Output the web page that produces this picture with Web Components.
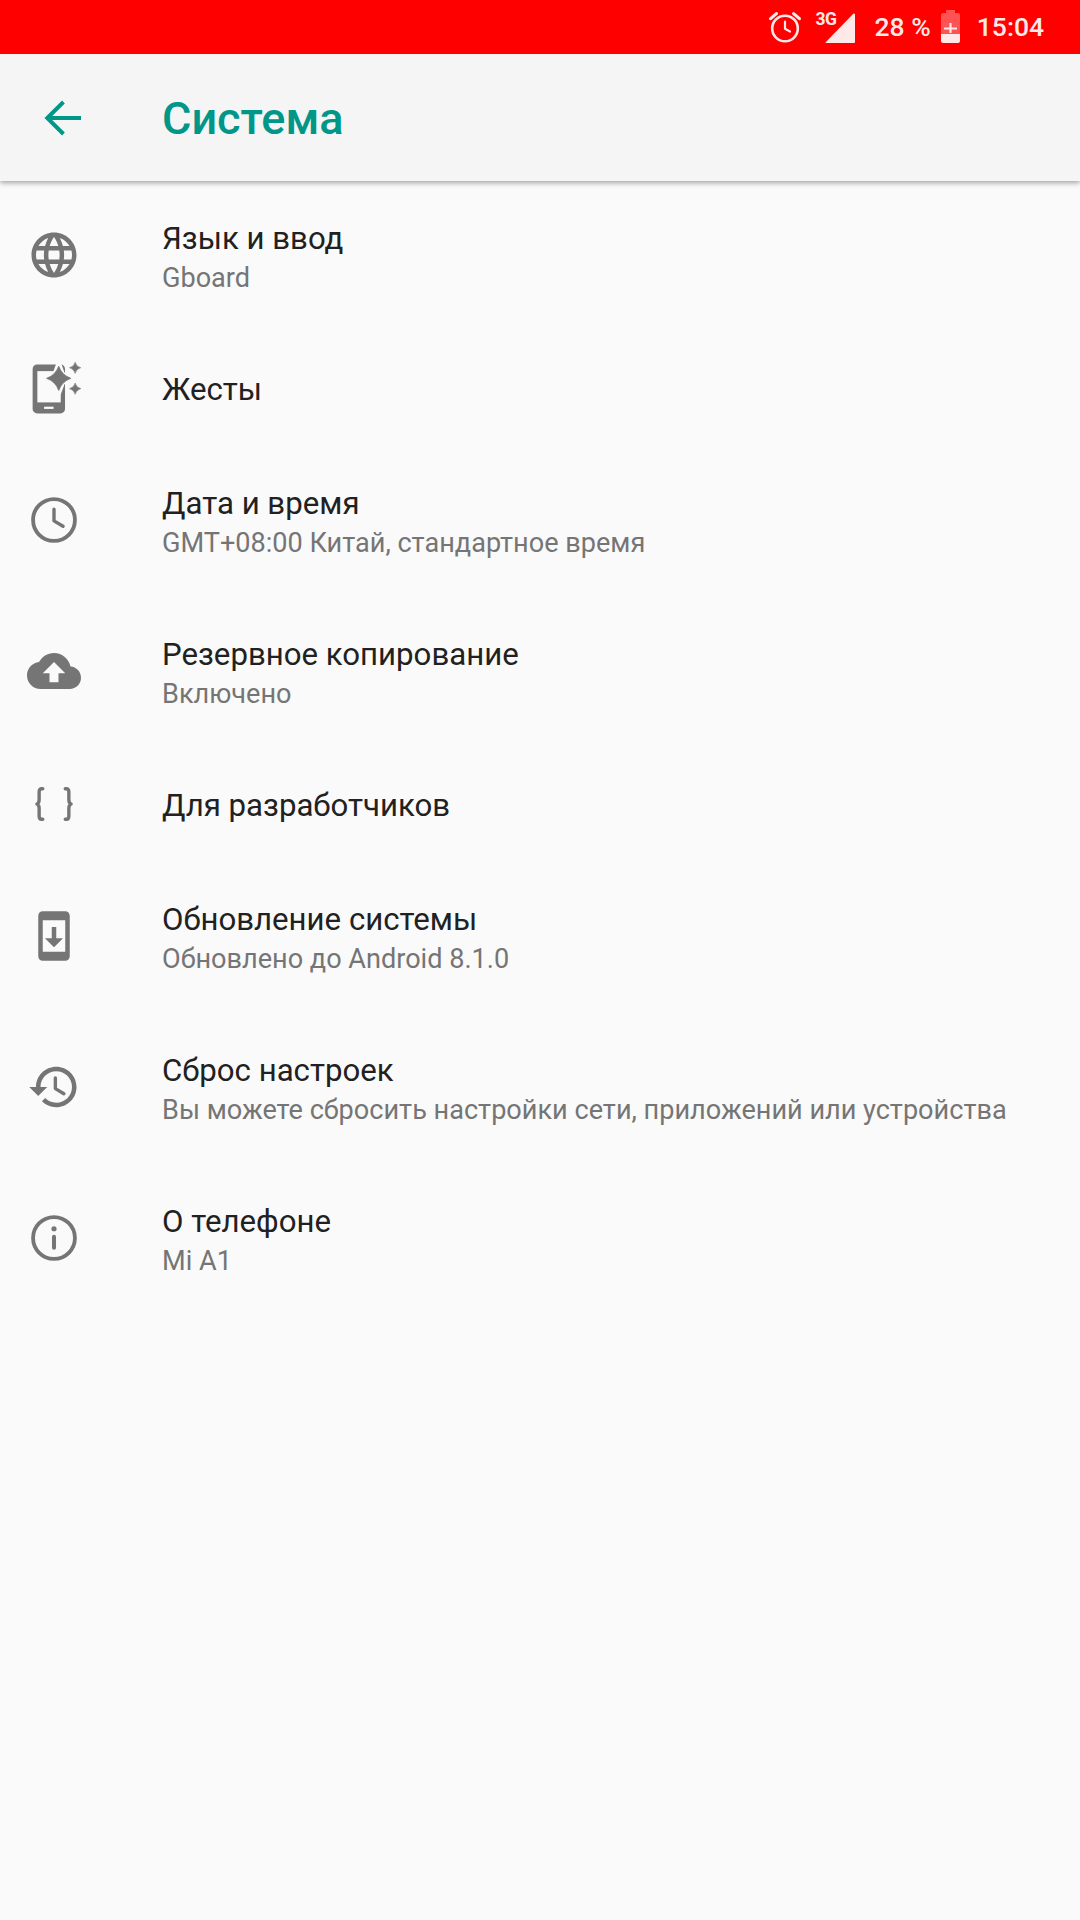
<!DOCTYPE html>
<html lang="ru"><head><meta charset="utf-8"><title>Система</title>
<style>
html,body{margin:0;padding:0;background:#fafafa}
body{width:1080px;height:1920px;font-family:Roboto,"Noto Sans",sans-serif;overflow:hidden}
</style></head><body>
<settings-screen>
  <status-bar slot="status" battery="28 %" time="15:04"></status-bar>
  <app-bar slot="bar">Система</app-bar>
  <settings-item icon="language" summary="Gboard">Язык и ввод</settings-item>
  <settings-item icon="gesture">Жесты</settings-item>
  <settings-item icon="clock" summary="GMT+08:00 Китай, стандартное время">Дата и время</settings-item>
  <settings-item icon="backup" summary="Включено">Резервное копирование</settings-item>
  <settings-item icon="dev">Для разработчиков</settings-item>
  <settings-item icon="update" summary="Обновлено до Android 8.1.0">Обновление системы</settings-item>
  <settings-item icon="restore" summary="Вы можете сбросить настройки сети, приложений или устройства">Сброс настроек</settings-item>
  <settings-item icon="info" summary="Mi A1">О телефоне</settings-item>
</settings-screen>
<script>
const ICONS={
language:'<path fill="currentColor" d="M11.99 2C6.47 2 2 6.48 2 12s4.47 10 9.99 10C17.52 22 22 17.52 22 12S17.52 2 11.99 2zm6.93 6h-2.95c-.32-1.25-.78-2.45-1.38-3.56 1.84.63 3.37 1.91 4.33 3.56zM12 4.04c.83 1.2 1.48 2.53 1.91 3.96h-3.82c.43-1.43 1.08-2.76 1.91-3.96zM4.26 14C4.1 13.36 4 12.69 4 12s.1-1.36.26-2h3.38c-.08.66-.14 1.32-.14 2 0 .68.06 1.34.14 2H4.26zm.82 2h2.95c.32 1.25.78 2.45 1.38 3.56-1.84-.63-3.37-1.9-4.33-3.56zm2.95-8H5.08c.96-1.66 2.49-2.93 4.33-3.56C8.81 5.55 8.35 6.75 8.03 8zM12 19.96c-.83-1.2-1.48-2.53-1.91-3.96h3.82c-.43 1.43-1.08 2.76-1.91 3.96zM14.34 14H9.66c-.09-.66-.16-1.32-.16-2 0-.68.07-1.35.16-2h4.68c.09.65.16 1.32.16 2 0 .68-.07 1.34-.16 2zm.25 5.56c.6-1.11 1.06-2.31 1.38-3.56h2.95c-.96 1.65-2.49 2.93-4.33 3.56zM16.36 14c.08-.66.14-1.32.14-2 0-.68-.06-1.34-.14-2h3.38c.16.64.26 1.31.26 2s-.1 1.36-.26 2h-3.38z"/>',
gesture:'<rect x="2.5" y="1.5" width="14.4" height="21.8" rx="2" fill="currentColor"/><rect x="4.6" y="4.5" width="10.4" height="13.9" fill="#fafafa"/><rect x="7.6" y="20.3" width="4.2" height="1" fill="#fafafa"/><path d="M14.1 1L15.9 5.9L20.8 7.7L15.9 9.5L14.1 14.4L12.3 9.5L7.4 7.7L12.3 5.9Z" fill="#fafafa" stroke="#fafafa" stroke-width="2" stroke-linejoin="round"/><path d="M14.1 2.3Q15.5 6.3 19.5 7.7Q15.5 9.1 14.1 13.1Q12.7 9.1 8.7 7.7Q12.7 6.3 14.1 2.3Z" fill="currentColor" stroke="currentColor" stroke-width=".35"/><path d="M21.4.5Q21.9 2.5 23.9 3Q21.9 3.5 21.4 5.5Q20.9 3.5 18.9 3Q20.9 2.5 21.4.5ZM21.4 9.8Q21.9 11.8 23.9 12.3Q21.9 12.8 21.4 14.8Q20.9 12.8 18.9 12.3Q20.9 11.8 21.4 9.8Z" fill="currentColor" stroke="currentColor" stroke-width=".25"/>',
clock:'<circle cx="12" cy="12" r="9.3" fill="none" stroke="currentColor" stroke-width="1.7"/><path d="M12 7.2V12.4L16 14.8" fill="none" stroke="currentColor" stroke-width="1.5" stroke-linecap="round" stroke-linejoin="round"/>',
backup:'<path fill="currentColor" d="M19.35 10.04C18.67 6.59 15.64 4 12 4 9.11 4 6.6 5.64 5.35 8.04 2.34 8.36 0 10.91 0 14c0 3.31 2.69 6 6 6h13c2.76 0 5-2.24 5-5 0-2.64-2.05-4.78-4.65-4.96zM14 13v4h-4v-4H7l5-5 5 5h-3z"/>',
dev:'<path fill="none" stroke="currentColor" stroke-width="1.5" stroke-linecap="round" stroke-linejoin="round" d="M7 5.2H6.6C5.7 5.2 5.4 5.8 5.4 6.6V10C5.4 11.2 5 11.8 4.4 12C5 12.2 5.4 12.8 5.4 14V17.4C5.4 18.2 5.7 18.8 6.6 18.8H7M17 5.2H17.4C18.3 5.2 18.6 5.8 18.6 6.6V10C18.6 11.2 19 11.8 19.6 12C19 12.2 18.6 12.8 18.6 14V17.4C18.6 18.2 18.3 18.8 17.4 18.8H17"/>',
update:'<path fill="currentColor" d="M17 1.01L7 1c-1.1 0-2 .9-2 2v18c0 1.1.9 2 2 2h10c1.1 0 2-.9 2-2V3c0-1.1-.9-1.99-2-1.99zM17 19H7V5h10v14zm-1-6h-3V8h-2v5H8l4 4 4-4z"/>',
restore:'<path fill="currentColor" d="M13 3c-4.97 0-9 4.03-9 9H1l3.89 3.89.07.14L9 12H6c0-3.87 3.13-7 7-7s7 3.13 7 7-3.13 7-7 7c-1.93 0-3.68-.79-4.94-2.06l-1.42 1.42C8.27 19.99 10.51 21 13 21c4.97 0 9-4.03 9-9s-4.03-9-9-9z"/><path d="M12.6 8V12.7L16.4 15" fill="none" stroke="currentColor" stroke-width="1.5" stroke-linecap="round" stroke-linejoin="round"/>',
info:'<circle cx="12" cy="12" r="9.3" fill="none" stroke="currentColor" stroke-width="1.7"/><circle cx="12" cy="7.9" r="1.15" fill="currentColor"/><rect x="11.1" y="10.6" width="1.8" height="6.6" rx=".9" fill="currentColor"/>'
};

class SettingsScreen extends HTMLElement{constructor(){super();this.attachShadow({mode:'open'}).innerHTML=`<style>
:host{display:flex;flex-direction:column;width:1080px;height:1920px;background:#fafafa}
main{display:flex;flex-direction:column}
</style><slot name="status"></slot><slot name="bar"></slot><main><slot></slot></main>`}}

class StatusBar extends HTMLElement{constructor(){super();this.attachShadow({mode:'open'}).innerHTML=`<style>
:host{display:flex;height:54px;background:#f00;color:#ffe8e8;align-items:center;justify-content:flex-end;padding-right:36px;font:500 26.5px/1 Roboto,sans-serif;position:relative;z-index:2}
svg{display:block;flex:none}
.alarm{margin-right:14px}.net{position:relative;width:39px;height:30px;margin-right:20px;margin-top:2px}
.net span{position:absolute;left:0;top:-2px;font-size:17.5px;line-height:16px;font-weight:700;letter-spacing:-.6px}
.net svg{position:absolute;right:0;top:0}
.pct{margin-right:10px}.batt{margin-right:17px;margin-top:-1px}
</style>
<svg class="alarm" width="34" height="34" viewBox="0 0 34 34" fill="none" stroke="currentColor"><circle cx="17" cy="18.5" r="12.8" stroke-width="2.6"/><path d="M17 11.5V18.8L22 21.5" stroke-width="2.2" stroke-linecap="round" stroke-linejoin="round"/><path d="M2.6 8.6L8.4 3.6M31.4 8.6L25.6 3.6" stroke-width="3.2" stroke-linecap="round"/></svg>
<div class="net"><span>3G</span><svg width="30" height="30" viewBox="0 0 30 30"><path d="M29 0.5Q30 0.5 30 1.5V29Q30 30 29 30H1Q0 30 .7 29.3L28.3 .8Q28.6 .5 29 .5Z" fill="currentColor"/></svg></div>
<span class="pct"></span>
<svg class="batt" width="19" height="33" viewBox="0 0 19 33"><path d="M5 0H14V3H17Q19 3 19 5V24H0V5Q0 3 2 3H5Z" fill="#ff5252"/><path d="M0 24H19V31Q19 33 17 33H2Q0 33 0 31Z" fill="currentColor"/><path d="M8.4 13H10.6V17.4H16V19.6H10.6V23H8.4V19.6H3V17.4H8.4Z" fill="currentColor"/></svg>
<span class="time"></span>`;
const s=this.shadowRoot;s.querySelector('.pct').textContent=this.getAttribute('battery');s.querySelector('.time').textContent=this.getAttribute('time')}}

class AppBar extends HTMLElement{constructor(){super();this.attachShadow({mode:'open'}).innerHTML=`<style>
:host{display:flex;align-items:center;height:127px;background:#f5f5f5;color:#009688;box-shadow:0 2px 5px rgba(0,0,0,.35);position:relative;z-index:1;flex:none}
.nav{width:162px;flex:none;display:flex;padding-left:36px;box-sizing:border-box}
svg{display:block}
h1{margin:0;font:500 45px/1 Roboto,sans-serif;padding-top:1px}
</style><div class="nav"><svg width="54" height="54" viewBox="0 0 24 24" fill="none" stroke="currentColor" stroke-width="1.75"><path d="M20 12H5.4M12.2 4.9L5 12L12.2 19.1" stroke-linejoin="miter"/></svg></div><h1><slot></slot></h1>`}}

class SettingsItem extends HTMLElement{constructor(){super();const sum=this.getAttribute('summary');
this.attachShadow({mode:'open'}).innerHTML=`<style>
:host{display:flex;align-items:center;height:${sum?151:114}px;color:#212121;flex:none}
.ic{width:162px;flex:none;padding:0 0 3px 27px;box-sizing:border-box;color:#757575}
svg{display:block}
.txt{padding-top:${sum?3:1}px}
.t{font:400 31.2px/39px Roboto,sans-serif;white-space:nowrap}
.s{font:400 27.1px/40px Roboto,sans-serif;color:#757575;white-space:nowrap}
</style><div class="ic"><svg width="54" height="54" viewBox="0 0 24 24">${ICONS[this.getAttribute('icon')]}</svg></div>
<div class="txt"><div class="t"><slot></slot></div>${sum?'<div class="s"></div>':''}</div>`;
if(sum)this.shadowRoot.querySelector('.s').textContent=sum}}

customElements.define('settings-screen',SettingsScreen);
customElements.define('status-bar',StatusBar);
customElements.define('app-bar',AppBar);
customElements.define('settings-item',SettingsItem);
</script></body></html>
